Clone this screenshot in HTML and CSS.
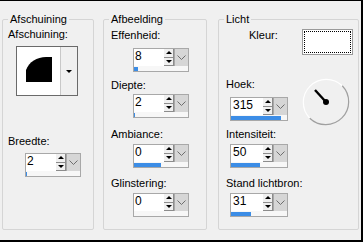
FILE: index.html
```html
<!DOCTYPE html>
<html lang="nl">

<head>
  <meta charset="UTF-8" />
  <title>Afschuining</title>
  <link rel="stylesheet" href="styles.css">
</head>

<body>
  <div class="window">
    <!-- Afschuining -->
    <div class="group group-bevel">
      <div class="group-title">Afschuining</div>
      <div class="label bevel-label">Afschuining:</div>
      <div class="bevel-pick">
        <div class="bevel-preview">
          <svg width="42" height="48" viewBox="0 0 42 48">
            <path d="M9 35 V23 C12 15 20 10 29 10 H35 V35 Z" fill="#000" />
          </svg>
        </div>
        <div class="bevel-drop"><span class="tri-down"></span></div>
      </div>
      <div class="label breedte-label">Breedte:</div>
      <div class="spin breedte-spin">
        <div class="spin-row">
          <div class="spin-value">2</div>
          <div class="spin-arrows"><span class="up"></span><span class="down"></span></div>
          <div class="spin-drop"><svg width="9" height="5"><polyline points="0.5,0.5 4.5,4.5 8.5,0.5" /></svg></div>
        </div>
        <div class="spin-bar"><div class="spin-fill" style="width: 1px"></div></div>
      </div>
    </div>

    <!-- Afbeelding -->
    <div class="group group-image">
      <div class="group-title">Afbeelding</div>
      <div class="label effen-label">Effenheid:</div>
      <div class="spin effen-spin">
        <div class="spin-row">
          <div class="spin-value">8</div>
          <div class="spin-arrows"><span class="up"></span><span class="down"></span></div>
          <div class="spin-drop"><svg width="9" height="5"><polyline points="0.5,0.5 4.5,4.5 8.5,0.5" /></svg></div>
        </div>
        <div class="spin-bar"><div class="spin-fill" style="width: 4px"></div></div>
      </div>
      <div class="label diepte-label">Diepte:</div>
      <div class="spin diepte-spin">
        <div class="spin-row">
          <div class="spin-value">2</div>
          <div class="spin-arrows"><span class="up"></span><span class="down"></span></div>
          <div class="spin-drop"><svg width="9" height="5"><polyline points="0.5,0.5 4.5,4.5 8.5,0.5" /></svg></div>
        </div>
        <div class="spin-bar"><div class="spin-fill" style="width: 1px"></div></div>
      </div>
      <div class="label ambiance-label">Ambiance:</div>
      <div class="spin ambiance-spin">
        <div class="spin-row">
          <div class="spin-value">0</div>
          <div class="spin-arrows"><span class="up"></span><span class="down"></span></div>
          <div class="spin-drop"><svg width="9" height="5"><polyline points="0.5,0.5 4.5,4.5 8.5,0.5" /></svg></div>
        </div>
        <div class="spin-bar"><div class="spin-fill" style="width: 27px"></div></div>
      </div>
      <div class="label glinster-label">Glinstering:</div>
      <div class="spin glinster-spin">
        <div class="spin-row">
          <div class="spin-value">0</div>
          <div class="spin-arrows"><span class="up"></span><span class="down"></span></div>
          <div class="spin-drop"><svg width="9" height="5"><polyline points="0.5,0.5 4.5,4.5 8.5,0.5" /></svg></div>
        </div>
        <div class="spin-bar"><div class="spin-fill" style="width: 0px"></div></div>
      </div>
    </div>

    <!-- Licht -->
    <div class="group group-light">
      <div class="group-title">Licht</div>
      <div class="kleur-row">
        <div class="label kleur-label">Kleur:</div>
        <div class="swatch"><div class="swatch-inner"></div></div>
      </div>
      <div class="hoek-row">
        <div class="hoek-col">
          <div class="label">Hoek:</div>
          <div class="spin spin-wide hoek-spin">
            <div class="spin-row">
              <div class="spin-value">315</div>
              <div class="spin-arrows"><span class="up"></span><span class="down"></span></div>
              <div class="spin-drop"><svg width="9" height="5"><polyline points="0.5,0.5 4.5,4.5 8.5,0.5" /></svg></div>
            </div>
            <div class="spin-bar"><div class="spin-fill" style="width: 50px"></div></div>
          </div>
        </div>
        <svg class="dial" width="48" height="48" viewBox="0 0 48 48">
          <path d="M40.26 7.74 A23 23 0 0 0 7.74 40.26" fill="none" stroke="#ffffff" stroke-width="1.2" />
          <path d="M7.74 40.26 A23 23 0 0 0 40.26 7.74" fill="none" stroke="#a0a0a0" stroke-width="1.2" />
          <line x1="24" y1="24" x2="13" y2="12" stroke="#000" stroke-width="2.4" />
          <circle cx="24" cy="24" r="3" fill="#000" />
        </svg>
      </div>
      <div class="label intens-label">Intensiteit:</div>
      <div class="spin spin-wide intens-spin">
        <div class="spin-row">
          <div class="spin-value">50</div>
          <div class="spin-arrows"><span class="up"></span><span class="down"></span></div>
          <div class="spin-drop"><svg width="9" height="5"><polyline points="0.5,0.5 4.5,4.5 8.5,0.5" /></svg></div>
        </div>
        <div class="spin-bar"><div class="spin-fill" style="width: 29px"></div></div>
      </div>
      <div class="label stand-label">Stand lichtbron:</div>
      <div class="spin spin-wide stand-spin">
        <div class="spin-row">
          <div class="spin-value">31</div>
          <div class="spin-arrows"><span class="up"></span><span class="down"></span></div>
          <div class="spin-drop"><svg width="9" height="5"><polyline points="0.5,0.5 4.5,4.5 8.5,0.5" /></svg></div>
        </div>
        <div class="spin-bar"><div class="spin-fill" style="width: 20px"></div></div>
      </div>
    </div>
  </div>
</body>

</html>
```

FILE: styles.css
```css
* {
  box-sizing: border-box;
  margin: 0;
  padding: 0;
}

body {
  font-family: "Liberation Sans", Arial, sans-serif;
  font-size: 11px;
  color: #000;
  background-color: #f0f0f0;
}

.window {
  width: 363px;
  height: 242px;
  display: flex;
  align-items: flex-start;
  padding: 18px 0 0 2px;
  background-color: #f0f0f0;
  border-top: 1px solid #000;
  border-right: 2px solid #000;
  border-bottom: 2px solid #000;
}

/* Group boxes */
.group {
  height: 211px;
  border: 1px solid #d5d5d5;
  border-radius: 2px;
}

.group-bevel {
  width: 92px;
  padding-left: 5px;
}

.group-image {
  width: 104px;
  margin-left: 9px;
  padding-left: 7px;
}

.group-light {
  width: 141px;
  margin-left: 11px;
  padding-left: 7px;
}

.group-title {
  width: fit-content;
  margin: -7px 0 0 -2px;
  padding: 0 2px;
  line-height: 13px;
  background-color: #f0f0f0;
}

.group-bevel .group-title {
  margin-left: 0;
}

.label {
  line-height: 13px;
  white-space: nowrap;
}

/* Afschuining */
.bevel-label {
  margin-top: 2px;
}

.bevel-pick {
  display: flex;
  width: 62px;
  height: 50px;
  margin: 5px 0 0 8px;
  border: 1px solid #6a6a6a;
  background-color: #fff;
}

.bevel-preview {
  flex: 1;
}

.bevel-preview svg {
  display: block;
}

.bevel-drop {
  width: 17px;
  display: flex;
  align-items: center;
  justify-content: center;
  background-color: #f0f0f0;
  border-left: 1px solid #c8c8c8;
}

.tri-down {
  width: 0;
  height: 0;
  border-left: 3px solid transparent;
  border-right: 3px solid transparent;
  border-top: 3px solid #000;
}

.breedte-label {
  margin-top: 39px;
}

.breedte-spin {
  margin: 5px 0 0 17px;
}

/* Spin controls */
.spin {
  width: 56px;
  height: 24px;
  border: 1px solid #a8a8a8;
  background-color: #fff;
}

.spin-row {
  display: flex;
  height: 17px;
}

.spin-value {
  width: 30px;
  padding-left: 1px;
  font-size: 12px;
  line-height: 15px;
}

.spin-arrows {
  width: 10px;
  display: flex;
  flex-direction: column;
}

.spin-arrows span {
  flex: 1;
  display: flex;
  align-items: center;
  justify-content: center;
  background-color: #f0f0f0;
  border-right: 1px solid #8c8c8c;
  border-bottom: 1px solid #8c8c8c;
}

.spin-arrows .up::after {
  content: "";
  border-left: 3px solid transparent;
  border-right: 3px solid transparent;
  border-bottom: 3px solid #000;
}

.spin-arrows .down::after {
  content: "";
  border-left: 3px solid transparent;
  border-right: 3px solid transparent;
  border-top: 3px solid #000;
}

.spin-drop {
  width: 14px;
  display: flex;
  align-items: center;
  justify-content: center;
  background-color: #d6d6d6;
  border-left: 1px solid #a8a8a8;
}

.spin-drop svg {
  display: block;
  fill: none;
  stroke: #6e6e6e;
  stroke-width: 1;
}

.spin-bar {
  height: 5px;
  padding-top: 1px;
  background-color: #f7f7f7;
}

.spin-fill {
  height: 4px;
  background-color: #3c8de6;
}

.spin-wide {
  width: 58px;
}

.spin-wide .spin-value {
  width: 32px;
  padding-left: 2px;
}

/* Afbeelding */
.effen-label {
  margin-top: 3px;
}

.group-image .spin {
  margin-left: 22px;
}

.effen-spin {
  margin-top: 6px;
}

.diepte-label {
  margin-top: 7px;
}

.diepte-spin {
  margin-top: 2px;
}

.ambiance-label,
.intens-label {
  margin-top: 10px;
}

.ambiance-spin,
.glinster-spin,
.intens-spin,
.stand-spin {
  margin-top: 3px;
}

.glinster-label,
.stand-label {
  margin-top: 9px;
}

/* Licht */
.kleur-row {
  display: flex;
  margin: 3px 5px 0 0;
}

.kleur-label {
  margin-left: 23px;
}

.swatch {
  width: 51px;
  height: 26px;
  margin-left: auto;
  padding: 1px;
  background-color: #fff;
  border: 1px solid #9a9a9a;
}

.swatch-inner {
  height: 100%;
  border: 1px dotted #000;
}

.hoek-row {
  display: flex;
  align-items: flex-start;
  margin-top: 23px;
}

.hoek-col {
  width: 62px;
}

.group-light .spin {
  margin-left: 4px;
}

.hoek-spin {
  margin-top: 6px;
}

.dial {
  display: block;
  margin-left: 14px;
}

.group-light .intens-label {
  margin-top: 2px;
}
```
